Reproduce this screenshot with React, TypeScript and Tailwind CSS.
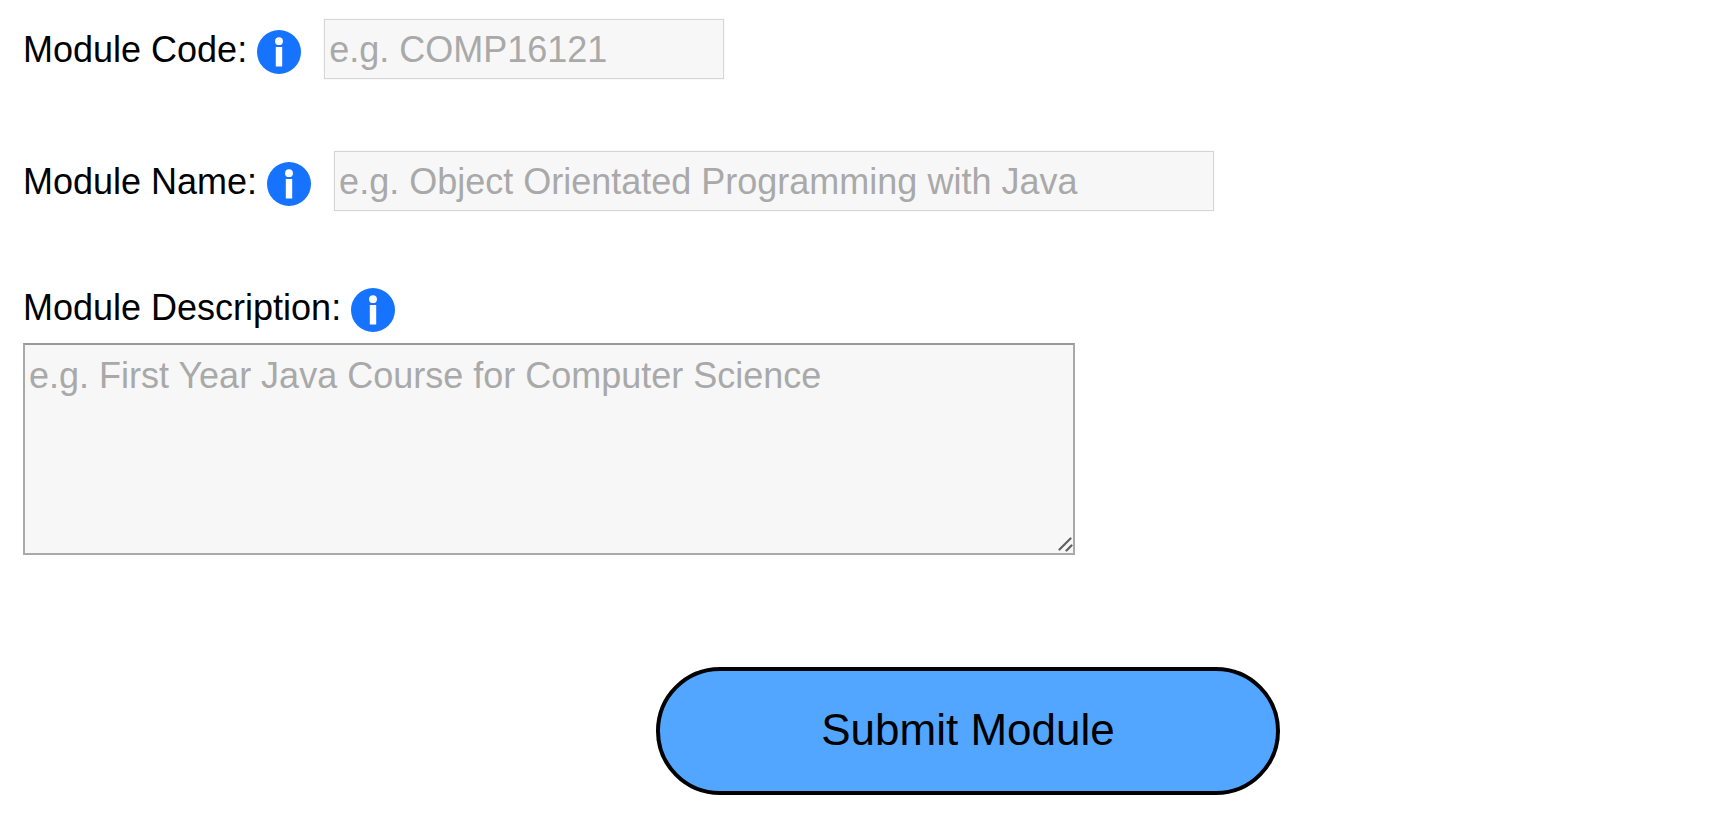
import type { ReactNode } from "react";

function InfoIcon() {
  return (
    <svg className="mt-1.5 size-11 shrink-0" viewBox="0 0 44 44" aria-hidden="true">
      <circle cx="22" cy="22" r="22" fill="#1573ff" />
      <circle cx="22" cy="11.2" r="3.9" fill="#fff" />
      <rect x="18.8" y="17" width="6.4" height="19.5" fill="#fff" />
    </svg>
  );
}

function FieldLabel({ htmlFor, children }: { htmlFor: string; children: ReactNode }) {
  return (
    <div className="flex h-12 items-center gap-2.5">
      <label htmlFor={htmlFor} className="pt-0.5 whitespace-nowrap">
        {children}
      </label>
      <InfoIcon />
    </div>
  );
}

const inputClass =
  "h-[60px] min-w-0 border border-[#d6d6d6] bg-[#f7f7f7] px-1 pt-0.5 shadow-[0_0_0_1px_#fafafa] outline-none placeholder:text-[#a9a9a9] placeholder:opacity-100";

export default function App() {
  return (
    <form
      className="min-h-screen bg-white px-[23px] pt-[19px] pb-5 font-['Liberation_Sans',Arial,sans-serif] text-[36px] leading-10 text-black"
      onSubmit={(event) => event.preventDefault()}
    >
      <div className="flex flex-col gap-[72px]">
        <div className="flex items-center gap-[23px]">
          <FieldLabel htmlFor="module-code">Module Code:</FieldLabel>
          <input
            id="module-code"
            type="text"
            placeholder="e.g. COMP16121"
            className={`${inputClass} w-[400px]`}
          />
        </div>
        <div className="flex items-center gap-[23px]">
          <FieldLabel htmlFor="module-name">Module Name:</FieldLabel>
          <input
            id="module-name"
            type="text"
            placeholder="e.g. Object Orientated Programming with Java"
            className={`${inputClass} w-[880px]`}
          />
        </div>
        <div className="flex flex-col items-start gap-3">
          <FieldLabel htmlFor="module-description">Module Description:</FieldLabel>
          <div className="relative max-w-full">
            <textarea
              id="module-description"
              placeholder="e.g. First Year Java Course for Computer Science"
              className="block h-[212px] w-[1052px] max-w-full resize border-2 border-[#a9a9a9] border-t-[#999999] bg-[#f7f7f7] px-1 py-[11px] outline-none placeholder:text-[#a9a9a9] placeholder:opacity-100 [&::-webkit-resizer]:bg-transparent"
            />
            <svg
              className="pointer-events-none absolute right-0.5 bottom-0.5 size-4"
              viewBox="0 0 16 16"
              stroke="#606060"
              strokeWidth="2.2"
              strokeLinecap="round"
              aria-hidden="true"
            >
              <path d="M2.5 12.5 13.5 1.5M9.5 13.5 14.5 8.5" />
            </svg>
          </div>
        </div>
      </div>
      <div className="mt-28 flex justify-center pl-[222px]">
        <button
          type="submit"
          className="h-32 w-[624px] rounded-full border-4 border-black bg-[#53a6ff] pb-0.5 text-[44px] leading-[52px]"
        >
          Submit Module
        </button>
      </div>
    </form>
  );
}
